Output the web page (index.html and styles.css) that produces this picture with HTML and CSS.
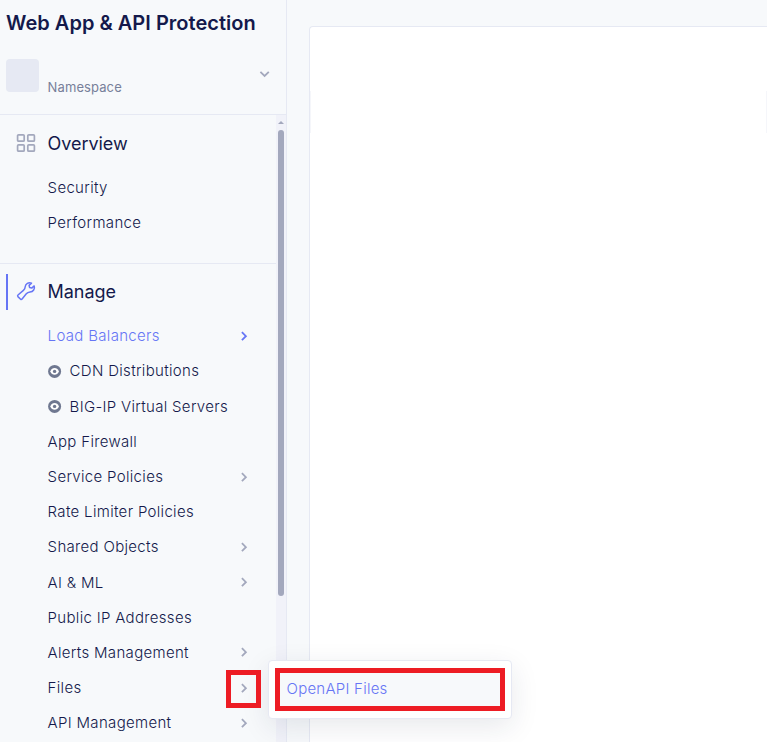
FILE: index.html
```html
<!DOCTYPE html>
<html lang="en">
<head>
<meta charset="utf-8">
<title>Web App &amp; API Protection</title>
<link rel="stylesheet" href="styles.css">
</head>
<body>
<svg class="defs" width="0" height="0" aria-hidden="true">
  <symbol id="chevron" viewBox="0 0 8 10"><path d="M1.9 1.2 L5.9 5.2 L1.9 9.2" fill="none" stroke="currentColor" stroke-width="1.8"/></symbol>
  <symbol id="eye" viewBox="0 0 14 14"><circle cx="6.6" cy="7.4" r="6.5" fill="#6f7890"/><path d="M2.3 7.4 C4 3 9.2 3 10.9 7.4 C9.2 11.8 4 11.8 2.3 7.4Z" fill="#fff"/><circle cx="6.6" cy="7.4" r="1.7" fill="#6f7890"/></symbol>
</svg>
<div class="app">
  <aside class="sidebar">
    <header class="head">
      <h1 class="title">Web App &amp; API Protection</h1>
      <div class="namespace">
        <span class="avatar"></span>
        <span class="ns-label">Namespace</span>
        <svg class="ns-arrow" width="12" height="8" viewBox="0 0 12 8"><path d="M1.4 1.8 L5.6 5.9 L9.8 1.8" fill="none" stroke="currentColor" stroke-width="1.8"/></svg>
      </div>
    </header>
    <div class="body">
      <nav class="nav">
        <section class="group overview">
          <h2 class="group-title">
            <svg class="icon" width="20" height="20" viewBox="0 0 20 20"><g fill="none" stroke="#a3a8bd" stroke-width="1.7"><rect x="1.6" y="1.8" width="6.6" height="6.4" rx="1"/><rect x="11.8" y="1.8" width="6.6" height="6.4" rx="1"/><rect x="1.6" y="11.8" width="6.6" height="6.4" rx="1"/><rect x="11.8" y="11.8" width="6.6" height="6.4" rx="1"/></g></svg>
            <span>Overview</span>
          </h2>
          <ul class="menu">
            <li class="item"><span>Security</span></li>
            <li class="item"><span>Performance</span></li>
          </ul>
        </section>
        <section class="group manage">
          <h2 class="group-title active">
            <svg class="icon" width="20" height="20" viewBox="0 0 20 20"><path d="M15.5 2.1 C12.6 .9 9.4 2.7 9.2 5.7 C9.1 7.4 8.7 8.3 7.4 9.4 L2 14 C1.4 14.6 1.4 15 1.9 15.6 L4.6 18.2 C5.2 18.7 5.6 18.6 6.1 18 L10.3 12.8 C11.4 11.5 12.2 11.2 14 11 C17.2 10.7 19.2 7.9 18.2 4.9 L15.7 7.1 L13.6 6.6 L13.1 4.4 Z" fill="none" stroke="#6675f5" stroke-width="1.5" stroke-linejoin="round"/></svg>
            <span>Manage</span>
          </h2>
          <ul class="menu">
            <li class="item current"><span>Load Balancers</span><svg class="chev"><use href="#chevron"/></svg></li>
            <li class="item"><svg class="eye"><use href="#eye"/></svg><span>CDN Distributions</span></li>
            <li class="item"><svg class="eye"><use href="#eye"/></svg><span>BIG-IP Virtual Servers</span></li>
            <li class="item"><span>App Firewall</span></li>
            <li class="item"><span>Service Policies</span><svg class="chev"><use href="#chevron"/></svg></li>
            <li class="item"><span>Rate Limiter Policies</span></li>
            <li class="item"><span>Shared Objects</span><svg class="chev"><use href="#chevron"/></svg></li>
            <li class="item"><span>AI &amp; ML</span><svg class="chev"><use href="#chevron"/></svg></li>
            <li class="item"><span>Public IP Addresses</span></li>
            <li class="item"><span>Alerts Management</span><svg class="chev"><use href="#chevron"/></svg></li>
            <li class="item"><span>Files</span><svg class="chev"><use href="#chevron"/></svg></li>
            <li class="item"><span>API Management</span><svg class="chev"><use href="#chevron"/></svg></li>
          </ul>
        </section>
      </nav>
      <div class="scrollbar">
        <svg class="up" width="6" height="3" viewBox="0 0 6 3"><path d="M0 3 L3 0 L6 3Z" fill="#a3a8bd"/></svg>
        <div class="thumb"></div>
      </div>
    </div>
  </aside>
  <main class="main"><div class="panel"><i class="edge"></i><i class="edge"></i></div></main>
</div>
<div class="flyout"><a class="flyout-link">OpenAPI Files</a></div>
<div class="marker"></div>
</body>
</html>
```

FILE: styles.css
```css
* { box-sizing: border-box; }
body { margin: 0; background: #f7f9fb; font-family: Inter, "Liberation Sans", sans-serif; color: #14194b; overflow: hidden; }
h1, h2, ul { margin: 0; padding: 0; list-style: none; }
svg { display: block; flex: none; }
.defs { position: absolute; }
.app { display: flex; width: 767px; height: 742px; overflow: hidden; }
.sidebar { display: flex; flex-direction: column; flex: none; width: 287px; border-right: 1px solid #e6e9f3; }
.head { flex: none; height: 115px; padding: 9px 0 0 6px; border-bottom: 1px solid #e6e9f3; }
.title { font-size: 20px; line-height: 28px; font-weight: 600; letter-spacing: .02px; white-space: nowrap; }
.namespace { display: flex; align-items: flex-start; margin-top: 22px; }
.avatar { width: 33px; height: 33px; border-radius: 4px; background: #e6e9f3; }
.ns-label { flex: 1; margin: 18px 0 0 8.6px; font-size: 13px; line-height: 20px; color: #77809a; letter-spacing: .1px; }
.ns-arrow { margin: 11px 15px 0 0; color: #a3a8bd; }
.body { display: flex; flex: 1; min-height: 0; }
.nav { width: 276px; flex: none; overflow: hidden; }
.group { padding-top: 11px; }
.overview { height: 149px; border-bottom: 1px solid #e6e9f3; }
.manage { padding-top: 10px; }
.group-title { display: flex; align-items: center; height: 36px; margin-left: 6px; padding: 0 0 2px 10px; font-size: 18px; font-weight: 400; letter-spacing: -.05px; }
.group-title.active { border-left: 2px solid #6675f5; padding-left: 8px; }
.icon { margin-right: 11.6px; }
.menu { padding-top: 8.2px; }
.item { display: flex; align-items: center; height: 35.2px; padding: 0 28px 0 47.6px; font-size: 15px; font-weight: 300; letter-spacing: .32px; white-space: nowrap; }
.current { color: #6675f5; }
.chev { width: 8px; height: 10px; margin-left: auto; color: #a3a8bd; }
.current .chev { color: #6675f5; }
.eye { width: 14px; height: 14px; margin-right: 8px; }
.scrollbar { width: 10px; padding: 6px 2px 0; background: #f1f2f9; }
.thumb { width: 6px; height: 466px; margin-top: 6px; border-radius: 3px; background: #a3a8bd; }
.main { flex: 1; padding: 26px 0 0 22px; }
.panel { display: flex; justify-content: space-between; height: 730px; padding-top: 64px; border: 1px solid #e6e9f3; border-right: 0; border-radius: 4px 0 0; background: #fff; }
.edge { width: 1px; height: 42px; background: #f5f6fa; }
.flyout { position: absolute; left: 268px; top: 660px; width: 244px; height: 59px; padding: 7px 6px; border: 1px solid #e6e9f3; border-radius: 4px; background: #fff; box-shadow: 0 8px 28px rgba(30, 35, 70, .10); }
.flyout-link { display: block; width: 230px; height: 43px; padding-left: 6.5px; border: 5px solid #ed1c24; background: #f7f9fb; color: #6675f5; font-size: 15px; line-height: 31px; font-weight: 300; letter-spacing: .25px; }
.marker { position: absolute; left: 226px; top: 670px; width: 35px; height: 38px; border: 5px solid #ed1c24; }
```
